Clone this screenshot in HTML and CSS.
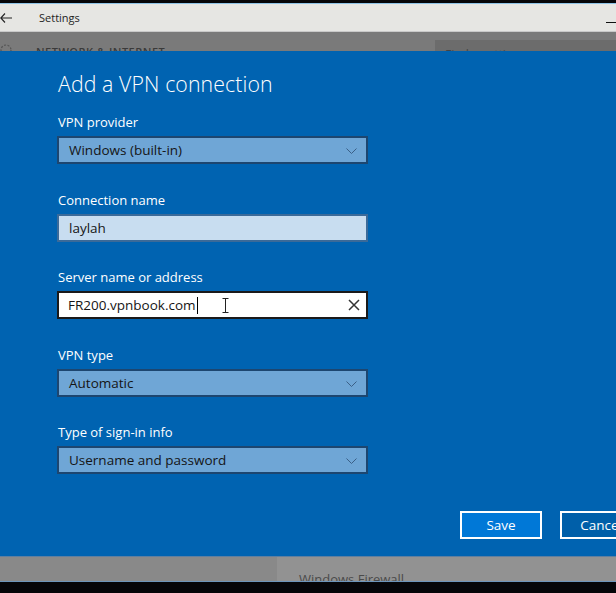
FILE: index.html
```html
<!DOCTYPE html>
<html>
<head>
<meta charset="utf-8">
<link rel="stylesheet" href="styles.css">
</head>
<body>
<div class="screen">
  <div class="topedge"></div>
  <div class="titlebar">
    <svg class="back" width="12" height="10" viewBox="0 0 12 10"><path d="M5 0.5 L0.8 5 L5 9.5 M0.8 5 H12" fill="none" stroke="#222" stroke-width="1.1"/></svg>
    <span class="apptitle">Settings</span>
    <span class="minimize"></span>
  </div>
  <div class="dimhead">
    <svg class="gear" width="16" height="16" viewBox="0 0 16 16"><circle cx="8" cy="8" r="5" fill="none" stroke="#555" stroke-width="1.2" stroke-dasharray="2 1.5"/></svg>
    <span class="section">NETWORK &amp; INTERNET</span>
    <div class="search"><span>Find a setting</span></div>
  </div>
  <div class="dialog">
    <h1 class="title">Add a VPN connection</h1>
    <div class="group">
      <div class="label">VPN provider</div>
      <div class="field select"><span>Windows (built-in)</span><svg class="chev" width="11" height="6" viewBox="0 0 11 6"><path d="M0.5 0.5 L5.5 5.5 L10.5 0.5" fill="none" stroke="#3b5f86" stroke-width="1"/></svg></div>
    </div>
    <div class="group">
      <div class="label">Connection name</div>
      <div class="field text-light"><span>laylah</span></div>
    </div>
    <div class="group">
      <div class="label">Server name or address</div>
      <div class="field text-active"><span class="value">FR200.vpnbook.com</span><span class="caret"></span>
        <svg class="ibeam" width="7" height="15" viewBox="0 0 7 15"><path d="M0.5 0.5 H6.5 M0.5 14.5 H6.5 M3.5 0.5 V14.5" fill="none" stroke="#222" stroke-width="1"/></svg>
        <svg class="clear" width="12" height="12" viewBox="0 0 12 12"><path d="M1 1 L11 11 M11 1 L1 11" fill="none" stroke="#333" stroke-width="1.5"/></svg>
      </div>
    </div>
    <div class="group">
      <div class="label">VPN type</div>
      <div class="field select"><span>Automatic</span><svg class="chev" width="11" height="6" viewBox="0 0 11 6"><path d="M0.5 0.5 L5.5 5.5 L10.5 0.5" fill="none" stroke="#3b5f86" stroke-width="1"/></svg></div>
    </div>
    <div class="group">
      <div class="label">Type of sign-in info</div>
      <div class="field select"><span>Username and password</span><svg class="chev" width="11" height="6" viewBox="0 0 11 6"><path d="M0.5 0.5 L5.5 5.5 L10.5 0.5" fill="none" stroke="#3b5f86" stroke-width="1"/></svg></div>
    </div>
    <div class="actions">
      <button class="btn primary">Save</button>
      <button class="btn">Cancel</button>
    </div>
  </div>
  <div class="dimfoot">
    <div class="footleft"></div>
    <div class="footright"><span>Windows Firewall</span></div>
  </div>
</div>
</body>
</html>
```
FILE: styles.css
```css
* { box-sizing: border-box; }
html, body { margin: 0; padding: 0; background: #050508; }
body { width: 616px; height: 593px; overflow: hidden; font-family: "Open Sans", "Noto Sans", sans-serif; }
.screen { display: flex; flex-direction: column; width: 616px; height: 593px; }
.topedge { flex: none; height: 4px; background: #050508; border-bottom: 1px solid #8fc3e6; }
.titlebar { flex: none; height: 28px; background: #e6e6e3; display: flex; align-items: center; position: relative; border-bottom: 1px solid #c9c9c9; }
.back { margin-left: 0; margin-right: 27px; }
.apptitle { font-size: 11px; color: #1e1e1e; }
.minimize { position: absolute; right: 0; top: 18px; width: 10px; height: 1px; background: #111; }
.dimhead { flex: none; height: 19px; background: #7a7a7a; display: flex; overflow: hidden; align-items: flex-start; }
.gear { margin-top: 10px; margin-left: -2px; }
.section { margin-left: 22px; margin-top: 12px; font-size: 11px; font-weight: 600; color: #3a3a3a; letter-spacing: 0.5px; }
.search { margin-left: auto; width: 181px; height: 20px; margin-top: 8px; background: #6c6c6c; padding: 6px 0 0 10px; font-size: 12px; color: #444; }
.dialog { flex: none; height: 505px; background: #0063b1; padding: 18px 0 0 57px; overflow: hidden; color: #fff; }
.title { margin: 0 0 14px 1px; font-size: 21.3px; line-height: 30px; font-weight: 300; color: #fff; letter-spacing: 0.1px; }
.group { margin-bottom: 26.5px; }
.label { font-size: 13px; line-height: 18px; height: 18px; margin: 0 0 5px 1px; color: #fff; }
.field { width: 311px; height: 28px; border: 2px solid #1c3f66; display: flex; align-items: center; padding-left: 10px; font-size: 13.5px; color: #151515; position: relative; }
.select { background: #6fa6d6; border-color: #1d4670; }
.chev { position: absolute; right: 9px; top: 10px; }
.text-light { background: #c8ddf0; border-color: #3b6a99; }
.text-active { background: #fff; border-color: #1a1a1a; padding-left: 9px; }
.caret { width: 1px; height: 17px; background: #000; margin-left: 1px; }
.ibeam { position: absolute; left: 163px; top: 5px; }
.clear { position: absolute; right: 6px; top: 6px; }
.actions { display: flex; gap: 18px; margin-left: 403px; margin-top: 37px; }
.btn { flex: none; width: 82px; height: 28px; border: 2px solid #fff; background: #005fa9; color: #fff; font-family: "Open Sans", "Noto Sans", sans-serif; font-size: 13.5px; padding: 0; }
.btn.primary { background: #0078d7; }
.dimfoot { flex: none; height: 26px; display: flex; border-top: 1px solid #5f7fa0; border-bottom: 1px solid #6d95bb; overflow: hidden; }
.footleft { width: 277px; background: #898989; }
.footright { flex: 1; background: #929292; padding: 13px 0 0 22px; font-size: 13px; color: #4a4a4a; line-height: 18px; }
```
